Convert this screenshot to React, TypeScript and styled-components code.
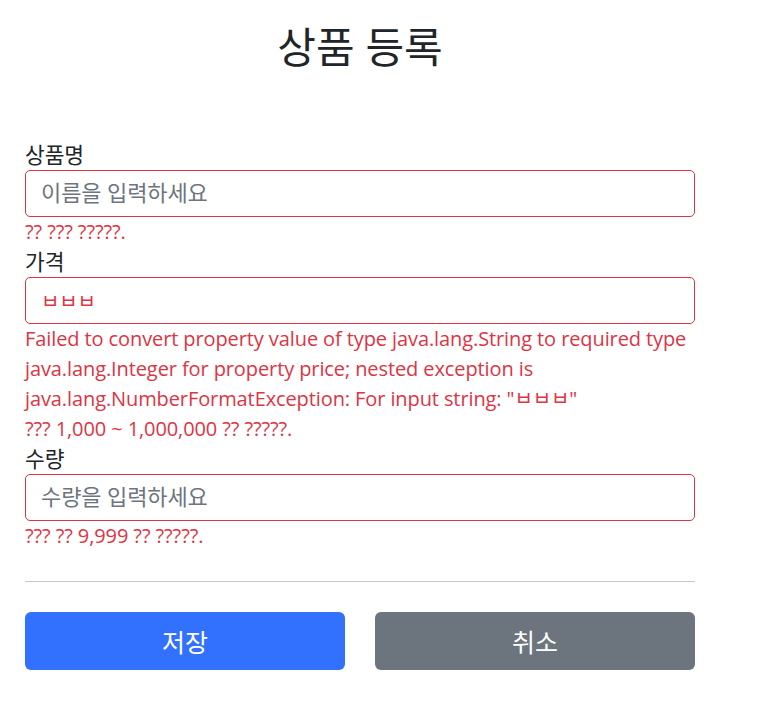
import React from "react";
import styled, { createGlobalStyle } from "styled-components";

const GlobalStyle = createGlobalStyle`
  html, body { margin: 0; padding: 0; background: #fff; }
  body {
    font-family: "Open Sans", "Noto Sans CJK KR", sans-serif;
    font-size: 20px;
    line-height: 30px;
    color: #212529;
    letter-spacing: -0.1px;
  }
  * { box-sizing: border-box; }
`;

const Container = styled.div`
  width: 670px;
  margin: 0 0 0 25px;
  padding-top: 23px;
`;

const Title = styled.h2`
  margin: 0 0 69px;
  text-align: center;
  font-size: 42px;
  line-height: 48px;
  font-weight: 400;
  letter-spacing: 0;
  color: #212529;
`;

const Form = styled.form`
  display: flex;
  flex-direction: column;
`;

const Field = styled.div`
  display: flex;
  flex-direction: column;
`;

const Label = styled.label`
  display: block;
  font-size: 21.5px;
  line-height: 30px;
`;

const Input = styled.input<{ $error?: boolean }>`
  display: block;
  width: 100%;
  height: 47px;
  padding: 0 15px;
  font-family: inherit;
  font-size: 20px;
  letter-spacing: -0.1px;
  color: ${(p) => (p.$error ? "#dc3545" : "#212529")};
  background: #fff;
  border: 1px solid #dc3545;
  border-radius: 5px;
  outline: none;
  &::placeholder {
    color: #6c757d;
    opacity: 1;
    font-size: 22px;
  }
`;

const ErrorText = styled.div`
  color: #dc3545;
  font-size: 20px;
  line-height: 30px;
`;

const Divider = styled.hr`
  margin: 30px 0;
  border: 0;
  border-top: 1px solid #c6c7c8;
`;

const ButtonRow = styled.div`
  display: grid;
  grid-template-columns: 1fr 1fr;
  column-gap: 30px;
`;

const Button = styled.button<{ $variant: "primary" | "secondary" }>`
  height: 58px;
  border: 0;
  border-radius: 6px;
  font-family: inherit;
  font-size: 25px;
  color: #fff;
  cursor: pointer;
  background: ${(p) => (p.$variant === "primary" ? "#3171fe" : "#6c757d")};
`;

export default function App() {
  return (
    <>
      <GlobalStyle />
      <Container>
        <Title>상품 등록</Title>
        <Form onSubmit={(e) => e.preventDefault()}>
          <Field>
            <Label htmlFor="itemName">상품명</Label>
            <Input id="itemName" placeholder="이름을 입력하세요" readOnly />
            <ErrorText>?? ??? ?????.</ErrorText>
          </Field>
          <Field>
            <Label htmlFor="price">가격</Label>
            <Input id="price" $error defaultValue="ㅂㅂㅂ" readOnly />
            <ErrorText>
              Failed to convert property value of type java.lang.String to required type
              java.lang.Integer for property price; nested exception is
              java.lang.NumberFormatException: For input string: "ㅂㅂㅂ"
            </ErrorText>
            <ErrorText>??? 1,000 ~ 1,000,000 ?? ?????.</ErrorText>
          </Field>
          <Field>
            <Label htmlFor="quantity">수량</Label>
            <Input id="quantity" placeholder="수량을 입력하세요" readOnly />
            <ErrorText>??? ?? 9,999 ?? ?????.</ErrorText>
          </Field>
          <Divider />
          <ButtonRow>
            <Button type="submit" $variant="primary">저장</Button>
            <Button type="button" $variant="secondary">취소</Button>
          </ButtonRow>
        </Form>
      </Container>
    </>
  );
}
